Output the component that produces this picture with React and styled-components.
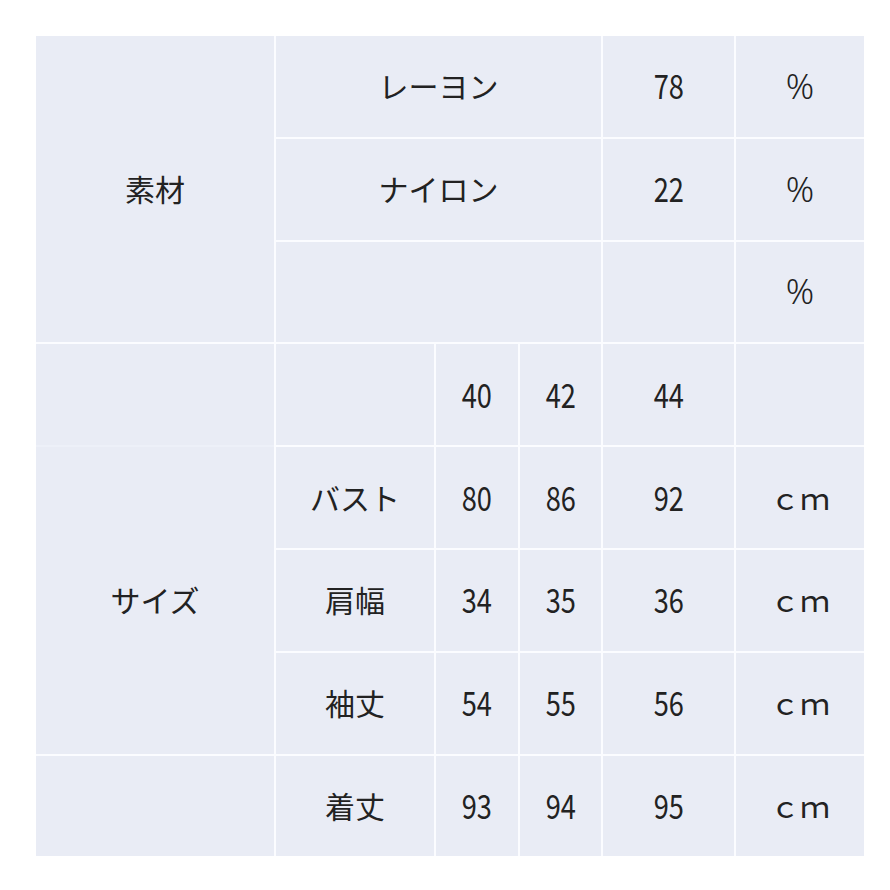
import React from "react";
import styled, { createGlobalStyle } from "styled-components";

const Global = createGlobalStyle`
  html, body { margin: 0; padding: 0; background: #ffffff; }
  body { font-family: "Noto Sans CJK JP", "Noto Sans", sans-serif; color: #222; }
`;

const BG = "#e9ecf5";

const Page = styled.div`
  padding: 36px 0 0 36px;
`;

const Table = styled.div`
  display: grid;
  grid-template-columns: 238px 158px 82px 81px 131px 128px;
  grid-template-rows: repeat(8, 100.8px);
  gap: 2px;
  width: 828px;
  background: #fbfcff;
`;

const Cell = styled.div`
  background: ${BG};
  display: flex;
  align-items: center;
  justify-content: center;
  font-size: 30px;
  line-height: 1;
  color: #222;
  grid-column: ${(p) => p.$col || "auto"};
  grid-row: ${(p) => p.$row || "auto"};
  box-shadow: ${(p) => (p.$joinBelow ? `0 2px 0 #edf0f8` : "none")};
  padding-bottom: 2px;
`;

const Num = styled.span`
  display: inline-block;
  font-size: 34px;
  transform: scaleX(0.8);
  letter-spacing: 0;
`;

const Pct = styled.span`
  font-size: 35px;
  font-family: "Noto Sans", sans-serif;
  font-weight: 300;
`;

const Unit = styled.span`
  font-size: 30px;
`;

const materials = [
  { name: "レーヨン", pct: "78" },
  { name: "ナイロン", pct: "22" },
  { name: "", pct: "" },
];

const sizes = [
  { label: "バスト", v: ["80", "86", "92"] },
  { label: "肩幅", v: ["34", "35", "36"] },
  { label: "袖丈", v: ["54", "55", "56"] },
];

export default function App() {
  return (
    <>
      <Global />
      <Page>
        <Table>
          <Cell $col="1" $row="1 / span 3">素材</Cell>
          {materials.map((m, i) => (
            <React.Fragment key={i}>
              <Cell $col="2 / span 3" $row={`${i + 1}`}>{m.name}</Cell>
              <Cell $col="5" $row={`${i + 1}`}>
                {m.pct && <Num>{m.pct}</Num>}
              </Cell>
              <Cell $col="6" $row={`${i + 1}`}>
                <Pct>%</Pct>
              </Cell>
            </React.Fragment>
          ))}

          <Cell $col="1" $row="4" $joinBelow />
          <Cell $col="2" $row="4" />
          <Cell $col="3" $row="4"><Num>40</Num></Cell>
          <Cell $col="4" $row="4"><Num>42</Num></Cell>
          <Cell $col="5" $row="4"><Num>44</Num></Cell>
          <Cell $col="6" $row="4" />

          <Cell $col="1" $row="5 / span 3">サイズ</Cell>
          {sizes.map((s, i) => (
            <React.Fragment key={s.label}>
              <Cell $col="2" $row={`${i + 5}`}>{s.label}</Cell>
              {s.v.map((v, j) => (
                <Cell key={j} $col={`${j + 3}`} $row={`${i + 5}`}>
                  <Num>{v}</Num>
                </Cell>
              ))}
              <Cell $col="6" $row={`${i + 5}`}><Unit>ｃｍ</Unit></Cell>
            </React.Fragment>
          ))}

          <Cell $col="1" $row="8" />
          <Cell $col="2" $row="8">着丈</Cell>
          <Cell $col="3" $row="8"><Num>93</Num></Cell>
          <Cell $col="4" $row="8"><Num>94</Num></Cell>
          <Cell $col="5" $row="8"><Num>95</Num></Cell>
          <Cell $col="6" $row="8"><Unit>ｃｍ</Unit></Cell>
        </Table>
      </Page>
    </>
  );
}
